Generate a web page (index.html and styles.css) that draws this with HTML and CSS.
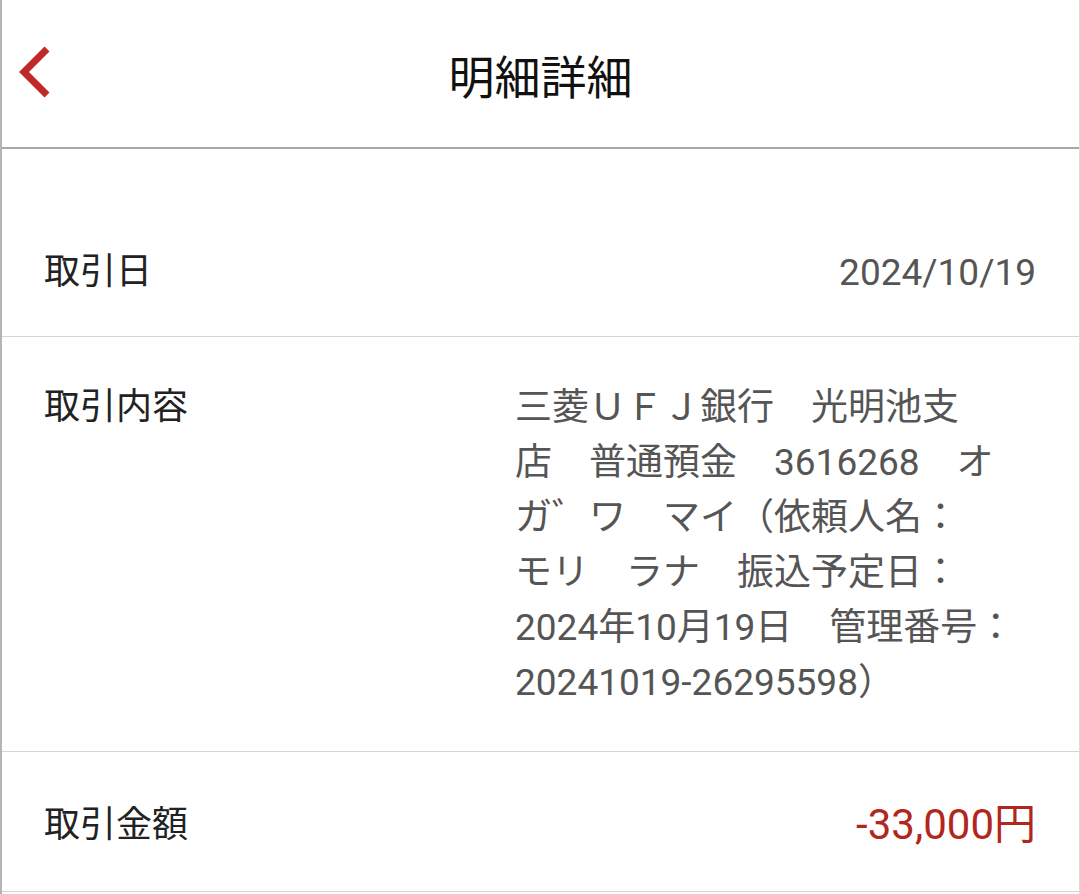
FILE: index.html
```html
<!DOCTYPE html>
<html lang="ja">
<head>
    <meta charset="UTF-8">
    <meta name="viewport" content="width=device-width, initial-scale=1.0">
    <title>明細詳細</title>
    <link rel="stylesheet" href="styles.css">
</head>
<body>
    <div class="screen">
        <header class="topbar">
            <a class="back" href="#">
                <svg width="40" height="56" viewBox="0 0 40 56">
                    <path d="M31 5 L8 28 L31 51" fill="none" stroke="#c0282a" stroke-width="7" stroke-linejoin="miter"/>
                </svg>
            </a>
            <h1 class="title">明細詳細</h1>
            <span></span>
        </header>

        <div class="spacer"></div>

        <div class="detail-list">
            <div class="detail-row row-date">
                <div class="label">取引日</div>
                <div class="value right date">2024/10/19</div>
            </div>
            <div class="detail-row row-content">
                <div class="label">取引内容</div>
                <div class="value">三菱ＵＦＪ銀行　光明池支<br>店　普通預金　3616268　オ<br>ガ゛ワ　マイ（依頼人名：<br>モリ　ラナ　振込予定日：<br>2024年10月19日　管理番号：<br>20241019-26295598）</div>
            </div>
            <div class="detail-row row-amount">
                <div class="label">取引金額</div>
                <div class="value right amount">-33,000円</div>
            </div>
        </div>
    </div>
</body>
</html>
```

FILE: styles.css
```css
* {
    margin: 0;
    padding: 0;
    box-sizing: border-box;
}

body {
    background-color: #fff;
    font-family: Roboto, "Noto Sans CJK JP", sans-serif;
    color: #222;
}

.screen {
    width: 1080px;
    min-height: 894px;
    border-left: 2px solid #b4b4b4;
    border-right: 1px solid #dcdcdc;
}

.topbar {
    height: 149px;
    display: grid;
    grid-template-columns: 1fr auto 1fr;
    align-items: center;
    border-bottom: 2px solid #a8a8a8;
}

.back {
    display: flex;
    padding-left: 14px;
    margin-top: -4px;
}

.title {
    font-size: 46px;
    font-weight: 400;
    color: #111;
}

.spacer {
    height: 59px;
}

.detail-row {
    display: grid;
    grid-template-columns: 471px 1fr;
    padding: 0 43px 0 42px;
    border-bottom: 1px solid #d4d4d4;
    font-size: 36px;
}

.label {
    color: #222;
}

.value {
    color: #555;
}

.right {
    text-align: right;
}

.row-date {
    padding-top: 41px;
    padding-bottom: 40px;
    line-height: 47px;
}

.date {
    font-size: 37px;
}

.row-content {
    padding-top: 43px;
    padding-bottom: 41px;
    line-height: 55px;
}

.row-content .value {
    font-size: 37px;
}

.row-amount {
    padding-top: 44px;
    padding-bottom: 37px;
    line-height: 58px;
}

.amount {
    font-size: 42px;
    color: #b22620;
}
```
